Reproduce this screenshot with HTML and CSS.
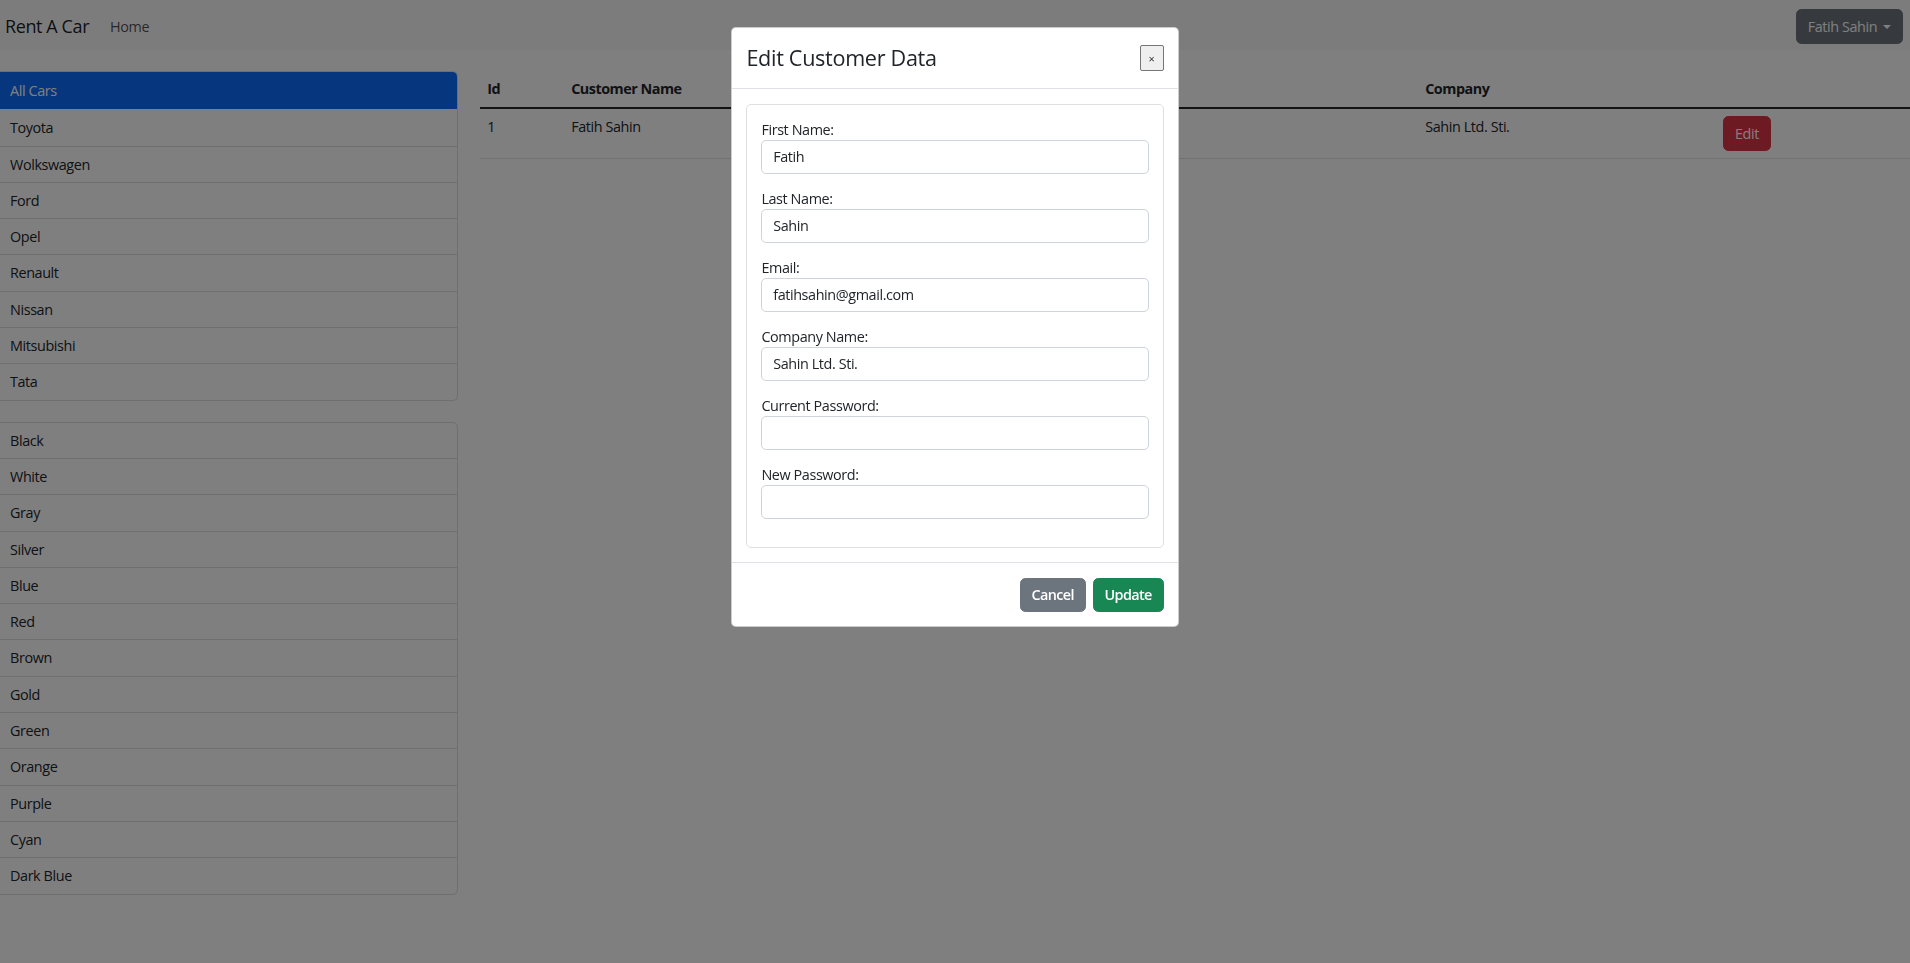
FILE: index.html
```html
<!DOCTYPE html>
<html lang="en">
<head>
<meta charset="utf-8">
<title>Rent A Car</title>
<link rel="stylesheet" href="styles.css">
</head>
<body>
<nav class="navbar">
  <div class="nav-left">
    <a class="brand" href="#">Rent A Car</a>
    <a class="nav-link" href="#">Home</a>
  </div>
  <button class="btn btn-secondary dropdown-toggle" type="button">Fatih Sahin</button>
</nav>

<main class="page">
  <aside class="sidebar">
    <ul class="list-group">
      <li class="list-item active">All Cars</li>
      <li class="list-item">Toyota</li>
      <li class="list-item">Wolkswagen</li>
      <li class="list-item">Ford</li>
      <li class="list-item">Opel</li>
      <li class="list-item">Renault</li>
      <li class="list-item">Nissan</li>
      <li class="list-item">Mitsubishi</li>
      <li class="list-item">Tata</li>
    </ul>
    <ul class="list-group colors">
      <li class="list-item">Black</li>
      <li class="list-item">White</li>
      <li class="list-item">Gray</li>
      <li class="list-item">Silver</li>
      <li class="list-item">Blue</li>
      <li class="list-item">Red</li>
      <li class="list-item">Brown</li>
      <li class="list-item">Gold</li>
      <li class="list-item">Green</li>
      <li class="list-item">Orange</li>
      <li class="list-item">Purple</li>
      <li class="list-item">Cyan</li>
      <li class="list-item">Dark Blue</li>
    </ul>
  </aside>

  <section class="content">
    <table class="table">
      <colgroup>
        <col class="c-id">
        <col class="c-name">
        <col class="c-email">
        <col class="c-company">
        <col>
      </colgroup>
      <thead>
        <tr>
          <th>Id</th>
          <th>Customer Name</th>
          <th>Email</th>
          <th>Company</th>
          <th></th>
        </tr>
      </thead>
      <tbody>
        <tr>
          <td>1</td>
          <td>Fatih Sahin</td>
          <td>fatihsahin@gmail.com</td>
          <td>Sahin Ltd. Sti.</td>
          <td><button class="btn btn-danger" type="button">Edit</button></td>
        </tr>
      </tbody>
    </table>
  </section>
</main>

<div class="backdrop"></div>

<div class="modal">
  <div class="modal-dialog">
    <div class="modal-header">
      <h4 class="modal-title">Edit Customer Data</h4>
      <button class="close" type="button"><span>&times;</span></button>
    </div>
    <div class="modal-body">
      <form class="card">
        <div class="field">
          <label for="fn">First Name:</label>
          <input id="fn" class="form-control" type="text" value="Fatih">
        </div>
        <div class="field">
          <label for="ln">Last Name:</label>
          <input id="ln" class="form-control" type="text" value="Sahin">
        </div>
        <div class="field">
          <label for="em">Email:</label>
          <input id="em" class="form-control" type="text" value="fatihsahin@gmail.com">
        </div>
        <div class="field">
          <label for="cn">Company Name:</label>
          <input id="cn" class="form-control" type="text" value="Sahin Ltd. Sti.">
        </div>
        <div class="field">
          <label for="cp">Current Password:</label>
          <input id="cp" class="form-control" type="password">
        </div>
        <div class="field">
          <label for="np">New Password:</label>
          <input id="np" class="form-control" type="password">
        </div>
      </form>
    </div>
    <div class="modal-footer">
      <button class="btn btn-secondary" type="button">Cancel</button>
      <button class="btn btn-success" type="button">Update</button>
    </div>
  </div>
</div>
</body>
</html>
```

FILE: styles.css
```css
* {
  box-sizing: border-box;
}

html, body {
  margin: 0;
  padding: 0;
}

body {
  font-family: "Open Sans", "Noto Sans", sans-serif;
  font-size: 14.4px;
  line-height: 21.6px;
  letter-spacing: -0.4px;
  color: #212529;
  background: #fff;
  min-height: 963px;
}

a {
  text-decoration: none;
}

/* ---------- navbar ---------- */
.navbar {
  height: 50px;
  display: flex;
  align-items: center;
  justify-content: space-between;
  padding: 3px 7px 0 5px;
  background: #f8f9fa;
}

.nav-left {
  display: flex;
  align-items: center;
  gap: 21px;
}

.brand {
  font-size: 18px;
  line-height: 27px;
  letter-spacing: -0.4px;
  color: rgba(0, 0, 0, 0.9);
}

.nav-link {
  color: rgba(0, 0, 0, 0.7);
  font-size: 14.4px;
}

/* ---------- buttons ---------- */
.btn {
  font-family: inherit;
  font-size: 14.4px;
  line-height: 21.6px;
  letter-spacing: -0.4px;
  padding: 5.4px 10.8px;
  border: 1px solid transparent;
  border-radius: 5.4px;
  color: #fff;
  cursor: pointer;
}

.btn-secondary {
  background: #6c757d;
  border-color: #6c757d;
}

.btn-success {
  background: #198754;
  border-color: #198754;
}

.btn-danger {
  background: #dc3545;
  border-color: #dc3545;
}

.modal-footer .btn {
  font-weight: 600;
  letter-spacing: -0.6px;
}

.dropdown-toggle::after {
  content: "";
  display: inline-block;
  margin-left: 6px;
  vertical-align: 3px;
  border-top: 4.5px solid #fff;
  border-left: 4.5px solid transparent;
  border-right: 4.5px solid transparent;
}

/* ---------- page layout ---------- */
.page {
  display: flex;
  gap: 22px;
  padding-top: 21px;
}

.sidebar {
  width: 458px;
  flex: none;
  display: flex;
  flex-direction: column;
  gap: 21px;
}

.list-group {
  list-style: none;
  margin: 0;
  padding: 0;
  border: 1px solid rgba(0, 0, 0, 0.125);
  border-left: 0;
  border-radius: 0 5.4px 5.4px 0;
  overflow: hidden;
}

.list-item {
  padding: 7px 14px 7px 10px;
  line-height: 21.3px;
  border-top: 1px solid rgba(0, 0, 0, 0.125);
}

.list-item:first-child {
  border-top: 0;
}

.list-item.active {
  padding-top: 8px;
  padding-bottom: 8px;
  background: #0d6efd;
  color: #fff;
}

.list-item.active + .list-item {
  border-top-color: transparent;
}

/* ---------- table ---------- */
.content {
  flex: 1;
}

.table {
  width: 100%;
  border-collapse: collapse;
  table-layout: fixed;
}

.c-id { width: 84px; }
.c-name { width: 340px; }
.c-email { width: 514px; }
.c-company { width: 298px; }

.table th,
.table td {
  text-align: left;
  vertical-align: top;
  padding: 7.2px;
  white-space: nowrap;
}

.table th {
  font-weight: 700;
  letter-spacing: -0.5px;
  border-bottom: 2px solid #212529;
}

.table td {
  border-bottom: 1px solid #dee2e6;
}

/* ---------- modal ---------- */
.backdrop {
  position: fixed;
  inset: 0;
  background: rgba(0, 0, 0, 0.5);
}

.modal {
  position: fixed;
  inset: 0;
}

.modal-dialog {
  width: 448px;
  margin: 27px auto 0;
  background: #fff;
  border: 1px solid rgba(0, 0, 0, 0.2);
  border-radius: 5px;
}

.modal-header {
  display: flex;
  align-items: center;
  justify-content: space-between;
  padding: 14px 14.4px;
  border-bottom: 1px solid #dee2e6;
}

.modal-title {
  margin: 0;
  font-size: 21.6px;
  line-height: 32.4px;
  font-weight: 400;
  letter-spacing: -0.3px;
}

.close {
  width: 24px;
  height: 26px;
  padding: 0;
  background: #efefef;
  border: 1px solid #767676;
  border-radius: 2px;
  font-family: inherit;
  font-size: 11px;
  line-height: 1;
  color: #333;
}

.modal-body {
  padding: 14.4px;
}

.card {
  margin: 0;
  padding: 14px;
  border: 1px solid rgba(0, 0, 0, 0.125);
  border-radius: 5px;
}

.field {
  margin-bottom: 14px;
}

.field label {
  display: block;
  line-height: 21px;
}

.form-control {
  display: block;
  width: 100%;
  height: 34px;
  padding: 5.4px 10.8px;
  font-family: inherit;
  font-size: 14.4px;
  line-height: 21.6px;
  letter-spacing: -0.4px;
  color: #212529;
  background: #fff;
  border: 1px solid #ced4da;
  border-radius: 5px;
}

.modal-footer {
  display: flex;
  justify-content: flex-end;
  gap: 7px;
  padding: 14.4px;
  border-top: 1px solid #dee2e6;
}
```
